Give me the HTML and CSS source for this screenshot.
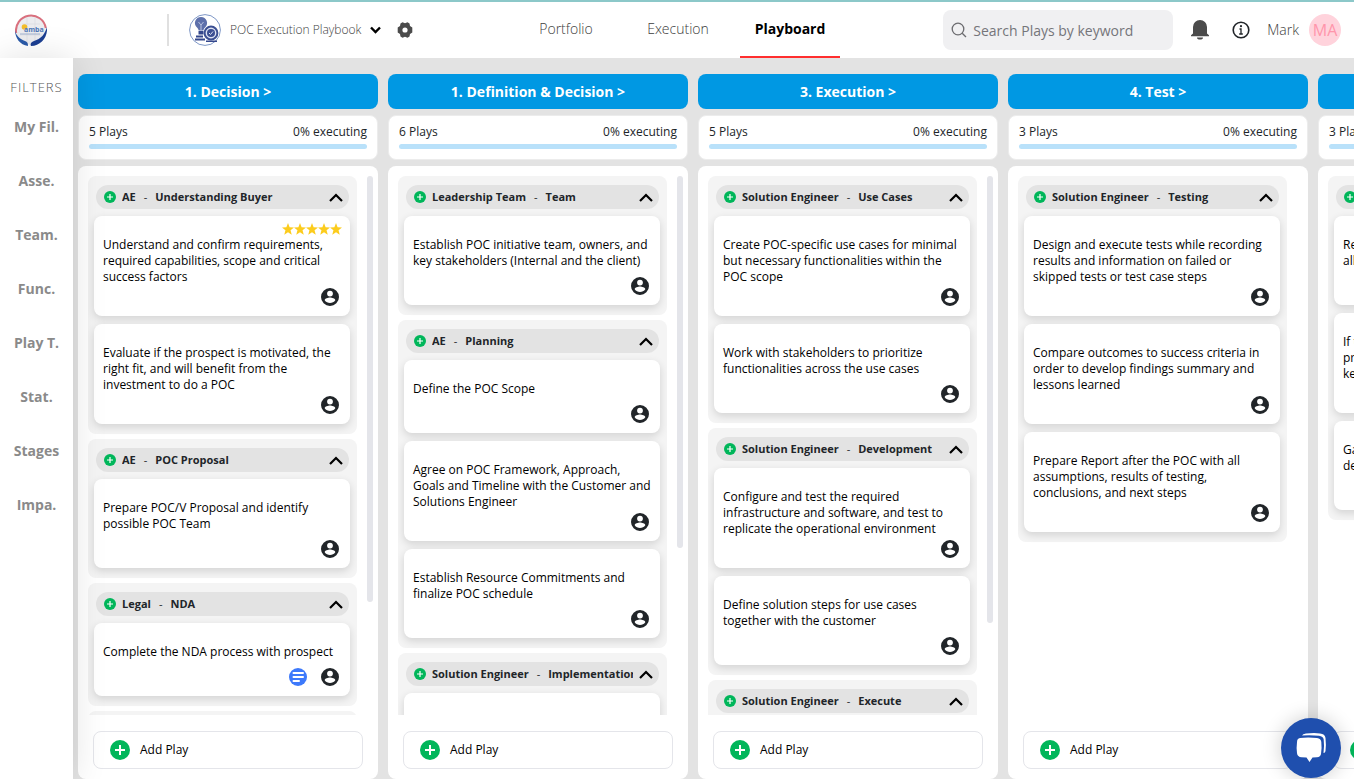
FILE: index.html
```html
<!DOCTYPE html>
<html lang="en">
<head>
  <meta charset="UTF-8">
  <meta name="viewport" content="width=device-width, initial-scale=1.0">
  <title>Playboard</title>
  <link rel="stylesheet" href="styles.css">
</head>
<body>
  <!-- shared icons -->
  <svg class="sprite" aria-hidden="true">
    <symbol id="i-plus" viewBox="0 0 24 24"><circle cx="12" cy="12" r="12" fill="#00b65a"/><path d="M12 6v12M6 12h12" stroke="#fff" stroke-width="2.4"/></symbol>
    <symbol id="i-up" viewBox="0 0 14 9"><path d="M1 8l6-6 6 6" fill="none" stroke="#000" stroke-width="2.2"/></symbol>
    <symbol id="i-user" viewBox="0 0 20 20"><path fill="#212529" fill-rule="evenodd" d="M10 1a9 9 0 1 0 0 18 9 9 0 0 0 0-18zm0 2.700a2.900 2.900 0 1 1 0 5.800 2.900 2.900 0 0 1 0-5.800zM4.700 13.200c.1-1.800 3.500-2.700 5.300-2.700s5.200.9 5.300 2.700a6.400 6.400 0 0 1-10.600 0z"/></symbol>
    <symbol id="i-star" viewBox="0 0 24 24"><path fill="#fccc1d" d="M12 0l3.200 8.500 8.800.5-6.900 5.600 2.400 9L12 18.500 4.500 23.600l2.400-9L0 9l8.800-.5z"/></symbol>
    <symbol id="i-note" viewBox="0 0 18 18"><circle cx="9" cy="9" r="9" fill="#3d79fb"/><path d="M4.500 5h9.500M4.500 9h9.500M4.500 13h5.500" stroke="#fff" stroke-width="2" stroke-linecap="round"/></symbol>
  </svg>

  <header class="topbar">
    <a class="brand" href="#" aria-label="Home">
      <svg width="32" height="32" viewBox="0 0 32 32">
        <circle cx="16" cy="16" r="15" fill="#ececef"/>
        <path d="M7 10h18M5 21h22M12 4v24M20 4v24" stroke="#d9dade" stroke-width=".6"/>
        <path d="M1.200 19A15 15 0 1 1 30.800 14" fill="none" stroke="#d9707e" stroke-width="2"/>
        <path d="M0 16c1 6 5 9 10 11 3 1 3 3 3 5C5 31 0 24 0 16z" fill="#2a5aa8"/>
        <path d="M32 13c1 10-6 19-16 19-1-2 0-4 3-5 7-2 11-7 13-14z" fill="#1c3f92"/>
        <circle cx="9.500" cy="13" r="2.800" fill="#f3bd2b"/>
        <text x="9" y="18" class="brand-text">amba</text>
        <path d="M5 20h20" stroke="#8fa3c9" stroke-width=".8"/>
      </svg>
    </a>
    <div class="playbook">
      <svg width="32" height="32" viewBox="0 0 32 32">
        <circle cx="16" cy="16" r="15.400" fill="#fff" stroke="#5d7cb8" stroke-width=".8"/>
        <path d="M12 3a6 6 0 0 0-4 10.500c1 .9 1.500 2 1.600 3h4.800c.1-1 .6-2.100 1.600-3A6 6 0 0 0 12 3z" fill="#5e70ab"/>
        <path d="M9.500 8l2.500 3 2.500-3M12 11v5" fill="none" stroke="#c5cde6" stroke-width=".9"/>
        <path d="M9.500 17h5v3.500h-5z" fill="#34478c"/>
        <circle cx="22" cy="19" r="6.400" fill="#dfe4f3" stroke="#3c4f93" stroke-width="2"/>
        <circle cx="22" cy="19" r="4" fill="#3c4f93"/><path d="M20 19l1.500 1.500 2.500-3" fill="none" stroke="#dfe4f3"/>
        <path d="M7 21.500h7v2H7zM6 24.500h10v2H6zM17 26.500h11v1.500H17z" fill="#34478c"/>
      </svg>
      <button class="playbook-name" type="button">POC Execution Playbook
        <svg width="11" height="8" viewBox="0 0 11 8"><path d="M1 1.500l4.500 4.500L10 1.500" fill="none" stroke="#000" stroke-width="2.400"/></svg>
      </button>
      <button class="icon-btn" type="button" aria-label="Settings">
        <svg width="16" height="16" viewBox="0 0 16 16"><path fill="#4b4b4b" fill-rule="evenodd" d="M5.500.3l2.500.9 2.500-.9 2 1.200.5 2.600 2.300 1.500v4.800L13 11.900l-.5 2.600-2 1.200-2.500-.9-2.500.9-2-1.200-.5-2.600L.7 10.400V5.600L3 4.100l.5-2.600zM8 5.400a2.600 2.600 0 1 0 0 5.200 2.600 2.600 0 0 0 0-5.200z"/></svg>
      </button>
    </div>
    <nav class="tabs">
      <a href="#">Portfolio</a>
      <a href="#">Execution</a>
      <a class="active" href="#">Playboard</a>
    </nav>
    <div class="tools">
      <label class="search">
        <svg width="16" height="16" viewBox="0 0 16 16"><circle cx="7" cy="7" r="5.800" fill="none" stroke="#6c6c70" stroke-width="1.300"/><path d="M11.200 11.200l3.800 3.800" stroke="#6c6c70" stroke-width="1.300"/></svg>
        <input type="text" placeholder="Search Plays by keyword" aria-label="Search Plays by keyword">
      </label>
      <div class="actions">
        <button class="icon-btn" type="button" aria-label="Notifications">
          <svg width="20" height="20" viewBox="0 0 20 20"><path fill="#4b4b4b" d="M10 0a7 7 0 0 1 7 7v6.500l2 1.800v.9H1v-.9l2-1.800V7a7 7 0 0 1 7-7zM7 17.500h6a3 2 0 0 1-6 0z"/></svg>
        </button>
        <button class="icon-btn" type="button" aria-label="Information">
          <svg width="18" height="18" viewBox="0 0 18 18"><circle cx="9" cy="9" r="7.800" fill="none" stroke="#212529" stroke-width="1.600"/><path d="M7.500 8H9v5m-1.800 0h3.600" fill="none" stroke="#212529" stroke-width="1.300"/><circle cx="9" cy="5.200" r="1.100" fill="#212529"/></svg>
        </button>
      </div>
      <a class="user" href="#">Mark <span class="avatar">MA</span></a>
    </div>
  </header>

  <div class="page">
    <aside class="filters">
      <h2>FILTERS</h2>
      <button type="button">My Fil.</button>
      <button type="button">Asse.</button>
      <button type="button">Team.</button>
      <button type="button">Func.</button>
      <button type="button">Play T.</button>
      <button type="button">Stat.</button>
      <button type="button">Stages</button>
      <button type="button">Impa.</button>
    </aside>
    <main class="board" id="board"></main>
  </div>

  <button class="chat" type="button" aria-label="Open chat">
    <svg width="32" height="32" viewBox="0 0 32 32">
      <path fill="#fff" d="M5 6Q13 5.200 22 6q4 .5 4.300 4 .7 6-.3 12-.5 3-4 3.300l-4.500.2L14.500 30l-3-4.500-5-.2q-4-.3-4.500-4-.8-5 0-11Q2 6.400 5 6z"/>
      <path fill="#fff" d="M7 3.600Q7.600 1.600 11 1.400q9-.6 14 0 5 .4 5.500 4.500.8 7 0 13-.2 1.700-2 2.200.9-7.500.2-13.500Q28.200 4.200 24 3.800 15 3 7 3.600z"/>
    </svg>
  </button>

  <script src="board.js"></script>
</body>
</html>
```
FILE: styles.css
```css
:root {
  --blue: #0098e3;
  --blue-light: #b9e1fa;
  --grey: #e3e3e3;
  --grey-light: #f4f4f4;
  --dark: #212529;
}
* {
  box-sizing: border-box;
}
body {
  margin: 0;
  height: 100vh;
  display: flex;
  flex-direction: column;
  overflow: hidden;
  background-color: var(--grey);
  color: var(--dark);
  font-family: "Open Sans", "Noto Sans", sans-serif;
  font-size: 12px;
  line-height: 16px;
}
button {
  margin: 0;
  padding: 0;
  border: none;
  background: none;
  color: inherit;
  font: inherit;
  cursor: pointer;
}
a {
  color: inherit;
  text-decoration: none;
}
svg {
  display: block;
  flex-shrink: 0;
}
.sprite {
  position: absolute;
  width: 0;
  height: 0;
}

/* top bar */
.topbar {
  flex: 0 0 58px;
  display: flex;
  align-items: center;
  border-top: 2px solid #8cc8c9;
  background-color: #fff;
  color: #3c3c3c;
  font-size: 14px;
  font-weight: 300;
}
.brand {
  width: 169px;
  padding-left: 15px;
  border-right: 2px solid #e0e0e0;
}
.brand-text {
  font-size: 7px;
  font-weight: 700;
  fill: #4f78b8;
}
.playbook {
  width: 331px;
  display: flex;
  align-items: center;
  padding-left: 20px;
}
.playbook-name {
  display: flex;
  align-items: center;
  gap: 9px;
  margin: 0 16px 0 9px;
  font-size: 12px;
  white-space: nowrap;
}
.tabs {
  align-self: stretch;
  display: flex;
  gap: 12px;
  padding-left: 16px;
}
.tabs a {
  width: 100px;
  line-height: 54px;
  text-align: center;
  border-bottom: 2px solid transparent;
}
.tabs .active {
  border-color: #ff2e2e;
  color: #000;
  font-weight: 700;
}
.tools {
  display: flex;
  align-items: center;
  margin-left: auto;
  padding-right: 13px;
  gap: 17px;
}
.actions {
  display: flex;
  align-items: center;
  gap: 22px;
}
.search {
  width: 230px;
  height: 40px;
  display: flex;
  align-items: center;
  gap: 6px;
  padding: 0 8px;
  border-radius: 8px;
  background-color: #f0f0f2;
}
.search input {
  flex: 1;
  min-width: 0;
  padding: 0;
  border: none;
  outline: none;
  background: none;
  font-family: inherit;
  font-size: 14px;
}
.search input::placeholder {
  color: #75757a;
}
.user {
  display: flex;
  align-items: center;
  gap: 10px;
}
.avatar {
  width: 32px;
  border-radius: 50%;
  background-color: #ffd3dc;
  color: #ff96ab;
  font-size: 16px;
  font-weight: 400;
  line-height: 32px;
  text-align: center;
}

/* filters */
.page {
  flex: 1;
  min-height: 0;
  display: flex;
}
.filters {
  z-index: 1;
  flex: 0 0 73px;
  display: flex;
  flex-direction: column;
  align-items: center;
  gap: 34px;
  padding-top: 19px;
  background-color: #fff;
  box-shadow: 0 0 36px rgba(0, 0, 0, 0.12);
  color: #8a8a8a;
}
.filters h2 {
  margin: 0 0 -14px;
  font-size: 13px;
  font-weight: 300;
  line-height: 20px;
  letter-spacing: 1px;
  color: #555;
}
.filters button {
  font-size: 14px;
  font-weight: 700;
  line-height: 20px;
}

/* board */
.board {
  flex: 1;
  min-width: 0;
  display: flex;
  gap: 10px;
  padding: 16px 5px 0;
  overflow: hidden;
}
.column {
  flex: 0 0 300px;
  display: flex;
  flex-direction: column;
  gap: 6px;
}
.column-title {
  margin: 0;
  border-radius: 8px;
  background-color: var(--blue);
  color: #fff;
  font-size: 14px;
  line-height: 35px;
  text-align: center;
}
.stats {
  display: flex;
  flex-wrap: wrap;
  align-content: flex-start;
  justify-content: space-between;
  row-gap: 4px;
  height: 45px;
  padding: 8px 10px 0;
  border: 1px solid #ececec;
  border-radius: 8px;
  background-color: #fff;
}
.progress {
  width: 100%;
  height: 5px;
  border-radius: 3px;
  background-color: var(--blue-light);
}
.lane {
  flex: 1;
  min-height: 0;
  display: flex;
  flex-direction: column;
  gap: 16px;
  padding: 10px 5px 10px 10px;
  border-radius: 8px;
  background-color: #fff;
}
.scroll {
  flex: 1;
  min-height: 0;
  display: flex;
  gap: 10px;
}
.groups {
  width: 269px;
  overflow: hidden;
}
.thumb {
  width: 6px;
  border-radius: 3px;
  background-color: #e4e5ea;
}
.group {
  display: flex;
  flex-direction: column;
  gap: 8px;
  margin-bottom: 5px;
  padding: 9px 7px 10px 6px;
  border-radius: 8px;
  background-color: var(--grey-light);
}
.group-head {
  display: flex;
  align-items: center;
  height: 24px;
  margin: 0 1px -1px 2px;
  padding: 0 6px 0 8px;
  border-radius: 12px;
  background-color: var(--grey);
}
.group-head h3 {
  flex: 1;
  display: flex;
  gap: 8px;
  margin: 0 6px;
  overflow: hidden;
  font-size: 11px;
  white-space: nowrap;
}
.group-head h3 span {
  font-weight: 400;
}
.card {
  display: flex;
  flex-direction: column;
  padding: 0 8px 0 9px;
  border-radius: 8px;
  background-color: #fff;
  box-shadow: 0 3px 8px rgba(0, 0, 0, 0.14);
  color: #000;
}
.card-top {
  display: flex;
  justify-content: flex-end;
  height: 21px;
  padding-top: 7px;
}
/* the third line may run into the footer */
.card p {
  max-height: 43px;
  margin: 0;
}
.card-foot {
  display: flex;
  justify-content: flex-end;
  align-items: center;
  gap: 13px;
  height: 36px;
  padding: 0 2px 2px 0;
}
.add-play {
  display: flex;
  align-items: center;
  gap: 10px;
  height: 38px;
  margin: 0 10px 0 5px;
  padding-left: 16px;
  border: 1px solid #e4e5ea;
  border-radius: 8px;
  color: #000;
}

/* chat launcher */
.chat {
  position: absolute;
  right: 13px;
  bottom: 1px;
  z-index: 2;
  display: flex;
  align-items: center;
  justify-content: center;
  width: 60px;
  height: 60px;
  border-radius: 50%;
  background-color: #1f4fae;
  box-shadow: 0 0 20px rgba(0, 0, 0, 0.2);
}
```
FILE: board.js
```js
const columns = [
  {
    title: "1. Decision", plays: 5, thumb: 428, groups: [
      { role: "AE", name: "Understanding Buyer", cards: [
        { text: "Understand and confirm requirements, required capabilities, scope and critical success factors", stars: 5 },
        { text: "Evaluate if the prospect is motivated, the right fit, and will benefit from the investment to do a POC" }
      ] },
      { role: "AE", name: "POC Proposal", cards: [{ text: "Prepare POC/V Proposal and identify possible POC Team" }] },
      { role: "Legal", name: "NDA", cards: [{ text: "Complete the NDA process with prospect", note: true }] },
      { cards: [] }
    ]
  },
  {
    title: "1. Definition & Decision", plays: 6, thumb: 374, groups: [
      { role: "Leadership Team", name: "Team", cards: [{ text: "Establish POC initiative team, owners, and key stakeholders (Internal and the client)" }] },
      { role: "AE", name: "Planning", cards: [
        { text: "Define the POC Scope" },
        { text: "Agree on POC Framework, Approach, Goals and Timeline with the Customer and Solutions Engineer" },
        { text: "Establish Resource Commitments and finalize POC schedule" }
      ] },
      { role: "Solution Engineer", name: "Implementation", cards: [{ text: "" }] }
    ]
  },
  {
    title: "3. Execution", plays: 5, thumb: 448, groups: [
      { role: "Solution Engineer", name: "Use Cases", cards: [
        { text: "Create POC-specific use cases for minimal but necessary functionalities within the POC scope" },
        { text: "Work with stakeholders to prioritize functionalities across the use cases" }
      ] },
      { role: "Solution Engineer", name: "Development", cards: [
        { text: "Configure and test the required infrastructure and software, and test to replicate the operational environment" },
        { text: "Define solution steps for use cases together with the customer" }
      ] },
      { role: "Solution Engineer", name: "Execute", cards: [{ text: "" }] }
    ]
  },
  {
    title: "4. Test", plays: 3, groups: [
      { role: "Solution Engineer", name: "Testing", cards: [
        { text: "Design and execute tests while recording results and information on failed or skipped tests or test case steps" },
        { text: "Compare outcomes to success criteria in order to develop findings summary and lessons learned" },
        { text: "Prepare Report after the POC with all assumptions, results of testing, conclusions, and next steps" }
      ] }
    ]
  },
  {
    title: "5. Close", plays: 3, groups: [
      { role: "AE", name: "Review", cards: [
        { text: "Review the report and outcomes with<br>all stakeholders" },
        { text: "If the POC is successful, present the<br>proposal and agree on next steps with<br>key stakeholders" },
        { text: "Gain approval and agreement to<br>deploy" }
      ] }
    ]
  }
];

const icon = (id, w, h = w) => `<svg width="${w}" height="${h}"><use href="#${id}"/></svg>`;

const cardHtml = card => `
  <article class="card">
    <div class="card-top">${icon("i-star", 12).repeat(card.stars || 0)}</div>
    <p>${card.text}</p>
    <div class="card-foot">${card.note ? icon("i-note", 18) : ""}${icon("i-user", 20)}</div>
  </article>`;

const headHtml = group => `
  <div class="group-head">
    ${icon("i-plus", 12)}
    <h3>${group.role} <span>-</span> ${group.name}</h3>
    <button type="button" aria-label="Collapse ${group.name}">${icon("i-up", 14, 9)}</button>
  </div>`;

const groupHtml = group => `
  <section class="group">
    ${group.name ? headHtml(group) : ""}
    ${group.cards.map(cardHtml).join("")}
  </section>`;

document.getElementById("board").innerHTML = columns.map(col => `
  <section class="column">
    <h2 class="column-title">${col.title.replace("&", "&amp;")} &gt;</h2>
    <div class="stats">
      <span>${col.plays} Plays</span><span>0% executing</span>
      <div class="progress"></div>
    </div>
    <div class="lane">
      <div class="scroll">
        <div class="groups">${col.groups.map(groupHtml).join("")}</div>
        ${col.thumb ? `<div class="thumb" style="height: ${Math.round(col.thumb / 5.39)}%"></div>` : ""}
      </div>
      <button class="add-play" type="button">${icon("i-plus", 20)} Add Play</button>
    </div>
  </section>`).join("");
```
